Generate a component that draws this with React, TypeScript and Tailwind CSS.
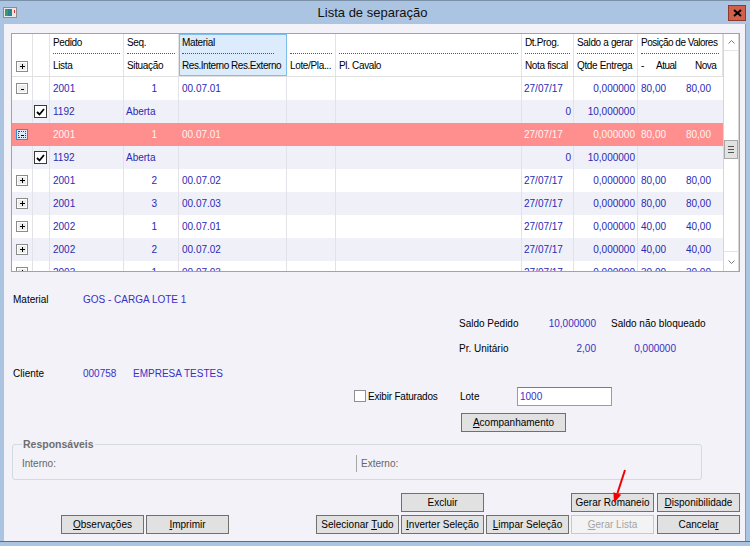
import React from 'react';

const COLS = 'grid-cols-[21px_17px_74px_55px_108px_49px_186px_52px_64px_85px]';

type Row = {
  tone: 'white' | 'light' | 'red';
  exp?: '+' | '-';
  focus?: boolean;
  checked?: boolean;
  a: string;
  seq?: string;
  sit?: string;
  mat?: string;
  dt?: string;
  nf?: string;
  saldo: string;
  atual?: string;
  nova?: string;
};

const ROWS: Row[] = [
  { tone: 'white', exp: '-', a: '2001', seq: '1', mat: '00.07.01', dt: '27/07/17', saldo: '0,000000', atual: '80,00', nova: '80,00' },
  { tone: 'light', checked: true, a: '1192', sit: 'Aberta', nf: '0', saldo: '10,000000' },
  { tone: 'red', exp: '-', focus: true, a: '2001', seq: '1', mat: '00.07.01', dt: '27/07/17', saldo: '0,000000', atual: '80,00', nova: '80,00' },
  { tone: 'light', checked: true, a: '1192', sit: 'Aberta', nf: '0', saldo: '10,000000' },
  { tone: 'white', exp: '+', a: '2001', seq: '2', mat: '00.07.02', dt: '27/07/17', saldo: '0,000000', atual: '80,00', nova: '80,00' },
  { tone: 'light', exp: '+', a: '2001', seq: '3', mat: '00.07.03', dt: '27/07/17', saldo: '0,000000', atual: '80,00', nova: '80,00' },
  { tone: 'white', exp: '+', a: '2002', seq: '1', mat: '00.07.01', dt: '27/07/17', saldo: '0,000000', atual: '40,00', nova: '40,00' },
  { tone: 'light', exp: '+', a: '2002', seq: '2', mat: '00.07.02', dt: '27/07/17', saldo: '0,000000', atual: '40,00', nova: '40,00' },
  { tone: 'white', exp: '+', a: '2003', seq: '1', mat: '00.07.03', dt: '27/07/17', saldo: '0,000000', atual: '30,00', nova: '30,00' },
];

function ExpandBox({ sign, focus }: { sign: '+' | '-'; focus?: boolean }) {
  return (
    <div
      className={`w-[12px] h-[11px] flex items-center justify-center border ${
        focus ? 'border-[#3b8ad6] bg-[#dde9f6]' : 'border-[#8b8b8b] bg-[#ededed] shadow-[inset_0_0_0_1px_#ffffff]'
      }`}
    >
      <div className={`w-[8px] h-[7px] flex items-center justify-center ${focus ? 'border border-dotted border-[#444]' : ''}`}>
        <svg width="5" height="5" viewBox="0 0 5 5">
          <path d={sign === '+' ? 'M0 2.5h5M2.5 0v5' : 'M1 3.5h3'} stroke="#000" strokeWidth="1" />
        </svg>
      </div>
    </div>
  );
}

function Check() {
  return (
    <div className="w-[13px] h-[13px] border border-[#3a3a3a] bg-white flex items-center justify-center">
      <svg width="9" height="8" viewBox="0 0 9 8">
        <path d="M1 4l2.5 2.5L8 1" fill="none" stroke="#000" strokeWidth="1.8" />
      </svg>
    </div>
  );
}

function Head({ top, bottom, active, tight }: { top: string; bottom: React.ReactNode; active?: boolean; tight?: boolean }) {
  return (
    <div
      className={`h-full flex flex-col whitespace-nowrap ${
        active ? 'pl-[2px] pr-[12px] border border-[#7dbfec] bg-[#dcecfc]' : 'px-[3px] border-r border-[#e3e3e3]'
      } ${tight ? 'tracking-[-0.5px]' : 'tracking-[-0.35px]'}`}
    >
      <div className={`leading-[12px] border-b border-dotted border-[#555] ${active ? 'pt-[2px] h-[19px]' : 'pt-[3px] h-[20px]'}`}>{top}</div>
      <div className={`mt-[6px] leading-[12px] ${active ? '-mr-[10px] tracking-[-0.45px]' : ''}`}>{bottom}</div>
    </div>
  );
}

function GridRow({ r }: { r: Row }) {
  const bg = r.tone === 'red' ? 'bg-[#ff8e8e]' : r.tone === 'light' ? 'bg-[#f0f0f8]' : 'bg-white';
  const line = r.tone === 'red' ? 'border-[#ff8e8e]' : 'border-[#e2e2e8]';
  const txt = r.tone === 'red' ? 'text-[#fff4f4]' : 'text-[#2a2ab4]';
  const cell = `h-full flex items-center border-r whitespace-nowrap overflow-hidden ${line}`;
  return (
    <div className={`grid ${COLS} h-[23px] shrink-0 ${bg} ${txt}`}>
      <div className={`${cell} justify-center`}>{r.exp && <ExpandBox sign={r.exp} focus={r.focus} />}</div>
      <div className={`${cell} pl-[1px]`}>{r.checked && <Check />}</div>
      <div className={`${cell} pl-[3px]`}>{r.a}</div>
      {r.seq ? (
        <div className={`${cell} justify-end pr-[21px]`}>{r.seq}</div>
      ) : (
        <div className={`${cell} pl-[2px]`}>{r.sit}</div>
      )}
      <div className={`${cell} pl-[3px]`}>{r.mat}</div>
      <div className={cell} />
      <div className={cell} />
      {r.dt ? (
        <div className={`${cell} pl-[2px]`}>{r.dt}</div>
      ) : (
        <div className={`${cell} justify-end pr-[2px]`}>{r.nf}</div>
      )}
      <div className={`${cell} justify-end pr-[2px]`}>{r.saldo}</div>
      <div className="h-full flex items-center whitespace-nowrap">
        <span className="pl-[3px]">{r.atual}</span>
        <span className="ml-auto pr-[12px]">{r.nova}</span>
      </div>
    </div>
  );
}

function Btn({ children, disabled, className = '' }: { children: React.ReactNode; disabled?: boolean; className?: string }) {
  return (
    <button
      type="button"
      className={`w-[83px] h-[19px] shrink-0 flex items-center justify-center text-[10px] leading-none border ${
        disabled
          ? 'border-[#c9c9c9] bg-[#f3f3f3] text-[#a4a4a4]'
          : 'border-[#707070] bg-[#e1e1e1] text-black'
      } ${className}`}
    >
      {children}
    </button>
  );
}

export default function App() {
  return (
    <div className="relative w-[750px] h-[546px] overflow-hidden bg-[#aac4e2] font-['Liberation_Sans',Arial,sans-serif] text-[10px] text-black flex flex-col">
      {/* title bar */}
      <div className="h-[24px] shrink-0 flex items-center border-t border-[#7990a8]">
        <svg className="ml-[3px]" width="14" height="11" viewBox="0 0 14 11">
          <rect x="0.5" y="0.5" width="13" height="10" fill="#e8e8e8" stroke="#8c8c8c" />
          <rect x="2" y="2" width="7" height="7" fill="#2f7f8f" />
          <rect x="2" y="2" width="3" height="7" fill="#3a9a6a" />
          <rect x="11" y="3" width="1" height="3" fill="#d03030" />
        </svg>
        <div className="flex-1 text-center text-[13px] leading-none text-[#111]">Lista de separação</div>
        <div className="mr-[4px] w-[18px] h-[16px] bg-[#d15f4a] border border-[#8e3b2e] flex items-center justify-center">
          <svg width="9" height="8" viewBox="0 0 9 8">
            <path d="M1 1l7 6M8 1L1 7" stroke="#000" strokeWidth="2" />
          </svg>
        </div>
      </div>

      <div className="flex flex-1">
        <div className="w-[4px]" />
        {/* body */}
        <div className="w-[742px] h-[517px] bg-[#f2f2f8] border-r border-[#8d9cab] flex flex-col">
          {/* grid */}
          <div className="mt-[9px] ml-[7px] w-[729px] h-[239px] border border-[#a3a3a3] bg-white flex">
            <div className="w-[711px] h-full overflow-hidden flex flex-col">
              <div className={`grid ${COLS} h-[43px] shrink-0 border-b border-[#e0e0e0] bg-white`}>
                <div className="border-r border-[#e3e3e3] flex items-end justify-center pb-[4px]">
                  <ExpandBox sign="+" />
                </div>
                <div className="border-r border-[#e3e3e3]" />
                <Head top="Pedido" bottom="Lista" />
                <Head top="Seq." bottom="Situação" />
                <Head top="Material" bottom="Res.Interno Res.Externo" active />
                <Head top="" bottom="Lote/Pla..." />
                <Head top="" bottom="Pl. Cavalo" />
                <Head top="Dt.Prog." bottom="Nota fiscal" />
                <Head top="Saldo a gerar" bottom="Qtde Entrega" />
                <Head
                  top="Posição de Valores"
                  tight
                  bottom={
                    <div className="flex">
                      <span className="w-[15px]">-</span>
                      <span className="w-[39px]">Atual</span>
                      <span>Nova</span>
                    </div>
                  }
                />
              </div>
              {ROWS.map((r, i) => (
                <GridRow key={i} r={r} />
              ))}
            </div>
            {/* scrollbar */}
            <div className="w-[16px] h-full bg-white border-x border-[#d6d6d6] flex flex-col">
              <div className="h-[17px] shrink-0 flex items-center justify-center border-b border-[#e4e4e4]">
                <svg width="7" height="4" viewBox="0 0 7 4">
                  <path d="M0.5 3.5l3-3 3 3" fill="none" stroke="#7a7a7a" />
                </svg>
              </div>
              <div className="flex-1">
                <div className="mt-[89px] h-[19px] bg-[#e2e2e2] border border-[#a8a8a8] flex flex-col items-center justify-center gap-[2px]">
                  <div className="w-[6px] h-px bg-[#555]" />
                  <div className="w-[6px] h-px bg-[#555]" />
                  <div className="w-[6px] h-px bg-[#555]" />
                </div>
              </div>
              <div className="h-[20px] shrink-0 flex items-center justify-center border-t border-[#e4e4e4]">
                <svg width="7" height="4" viewBox="0 0 7 4">
                  <path d="M0.5 0.5l3 3 3-3" fill="none" stroke="#7a7a7a" />
                </svg>
              </div>
            </div>
          </div>

          {/* info */}
          <div className="mt-[20px] h-[14px] pl-[9px] flex items-center">
            <span className="w-[70px]">Material</span>
            <span className="text-[#3a2fc4]">GOS - CARGA LOTE 1</span>
          </div>
          <div className="mt-[10px] h-[14px] ml-[455px] flex items-center whitespace-nowrap">
            <span className="w-[77px]">Saldo Pedido</span>
            <span className="w-[60px] text-right text-[#3a2fc4]">10,000000</span>
            <span className="ml-[15px]">Saldo não bloqueado</span>
          </div>
          <div className="mt-[11px] h-[14px] ml-[455px] flex items-center whitespace-nowrap">
            <span className="w-[77px]">Pr. Unitário</span>
            <span className="w-[60px] text-right text-[#3a2fc4]">2,00</span>
            <span className="w-[80px] text-right text-[#3a2fc4]">0,000000</span>
          </div>
          <div className="mt-[11px] h-[14px] pl-[9px] flex items-center">
            <span className="w-[70px]">Cliente</span>
            <span className="w-[50px] text-[#3a2fc4]">000758</span>
            <span className="text-[#3a2fc4]">EMPRESA TESTES</span>
          </div>
          <div className="mt-[6px] h-[20px] ml-[350px] flex items-center whitespace-nowrap">
            <div className="w-[12px] h-[12px] border border-[#8e8f8f] bg-white" />
            <span className="ml-[2px] w-[92px] tracking-[-0.2px]">Exibir Faturados</span>
            <span className="w-[57px]">Lote</span>
            <div className="w-[95px] h-[19px] border border-[#9c9c9c] border-t-[#7c7c7c] bg-white flex items-center pl-[2px] text-[#3a2fc4]">
              1000
            </div>
          </div>
          <div className="mt-[7px] ml-[457px]">
            <Btn className="w-[105px]">
              <span>
                <u>A</u>companhamento
              </span>
            </Btn>
          </div>

          {/* responsáveis */}
          <fieldset className="mt-[6px] ml-[8px] w-[690px] border border-[#d3dbe2] rounded-[3px] pl-[9px] pb-[9px]">
            <legend className="px-[1px] leading-[12px] text-[10.5px] font-bold text-[#6e6e6e]">Responsáveis</legend>
            <div className="mt-[6px] h-[14px] flex items-center text-[#666]">
              <span className="w-[334px]">Interno:</span>
              <div className="w-px h-[17px] bg-[#a8a8a8]" />
              <span className="ml-[4px]">Externo:</span>
            </div>
          </fieldset>

          {/* buttons */}
          <div className="mt-[13px] pl-[397px] flex">
            <Btn>Excluir</Btn>
            <Btn className="ml-[87px]">Gerar Romaneio</Btn>
            <Btn className="ml-[3px]">
              <span>
                <u>D</u>isponibilidade
              </span>
            </Btn>
          </div>
          <div className="mt-[3px] pl-[57px] flex">
            <Btn>
              <span>
                <u>O</u>bservações
              </span>
            </Btn>
            <Btn className="ml-[2px]">
              <span>
                <u>I</u>mprimir
              </span>
            </Btn>
            <Btn className="ml-[87px]">
              <span>
                Selecionar <u>T</u>udo
              </span>
            </Btn>
            <Btn className="ml-[2px]">
              <span>
                <u>I</u>nverter Seleção
              </span>
            </Btn>
            <Btn className="ml-[2px]">
              <span>
                <u>L</u>impar Seleção
              </span>
            </Btn>
            <Btn className="ml-[2px]" disabled>
              <span>
                <u>G</u>erar Lista
              </span>
            </Btn>
            <Btn className="ml-[3px]">
              <span>
                Cancela<u>r</u>
              </span>
            </Btn>
          </div>
        </div>
      </div>
      <div className="h-[5px] shrink-0 border-t border-[#5f6c7a] bg-[#aac4e2]" />

      {/* red annotation arrow */}
      <svg className="absolute inset-0 pointer-events-none" width="750" height="546" viewBox="0 0 750 546">
        <line x1="625" y1="470" x2="617.5" y2="493" stroke="#f00000" strokeWidth="2" />
        <polygon points="614,503 621.2,494.8 613.4,492.2" fill="#f00000" />
      </svg>
    </div>
  );
}
